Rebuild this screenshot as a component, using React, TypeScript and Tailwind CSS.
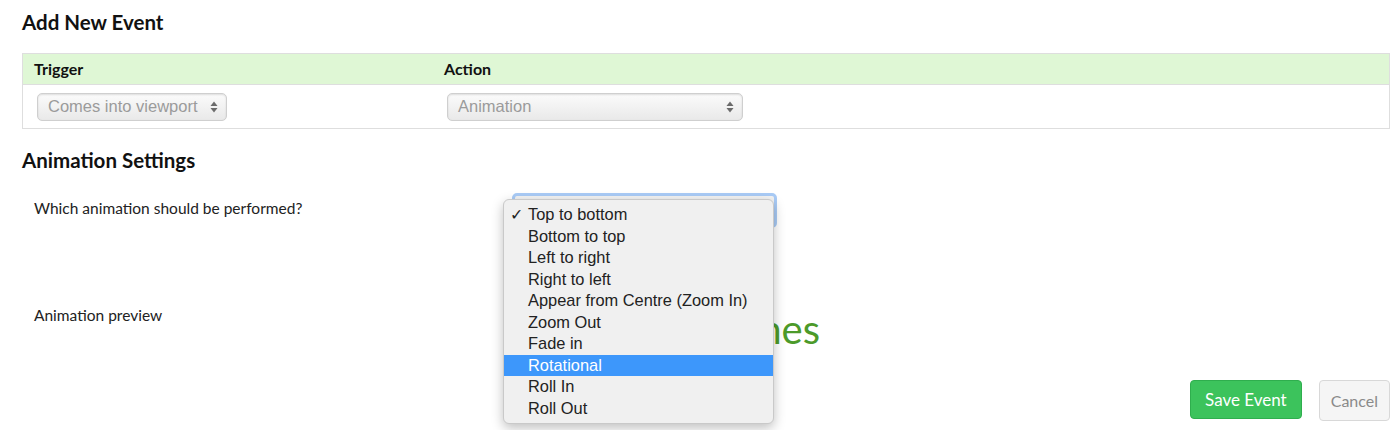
import React from "react";

const options = [
  "Top to bottom",
  "Bottom to top",
  "Left to right",
  "Right to left",
  "Appear from Centre (Zoom In)",
  "Zoom Out",
  "Fade in",
  "Rotational",
  "Roll In",
  "Roll Out",
];

function Arrows() {
  return (
    <svg width="8" height="12" viewBox="0 0 8 12" className="shrink-0">
      <path d="M4 0.5 L7.5 5 L0.5 5 Z" fill="#6b6b6b" />
      <path d="M4 11.5 L7.5 7 L0.5 7 Z" fill="#6b6b6b" />
    </svg>
  );
}

function FakeSelect({ label, className }: { label: string; className: string }) {
  return (
    <div
      className={`flex items-center justify-between h-[28px] pl-[10px] pr-[8px] rounded-[5px] border border-[#cfcfcf] bg-gradient-to-b from-[#fbfbfb] to-[#e9e9e9] shadow-[inset_0_1px_2px_rgba(0,0,0,0.12)] text-[16.5px] text-[#9b9b9b] ${className}`}
      style={{ fontFamily: '"Liberation Sans", Arial, sans-serif' }}
    >
      <span>{label}</span>
      <Arrows />
    </div>
  );
}

export default function App() {
  return (
    <div
      className="w-[1400px] h-[430px] bg-white pl-[22px] pr-[10px] overflow-hidden text-[#222]"
      style={{ fontFamily: 'Lato, "Open Sans", sans-serif' }}
    >
      <h2 className="pt-[9px] h-[53px] text-[20.5px] font-bold leading-[26px] text-[#111]">Add New Event</h2>

      <div className="border border-[#dedede]">
        <div className="grid grid-cols-[410px_1fr] h-[31px] items-center bg-[#dff7d5] border-b border-[#dedede] text-[16px] font-bold text-[#111]">
          <div className="pl-[11px]">Trigger</div>
          <div className="pl-[11px]">Action</div>
        </div>
        <div className="grid grid-cols-[410px_1fr] h-[43px] items-center">
          <div className="pl-[14px]">
            <FakeSelect label="Comes into viewport" className="w-[190px]" />
          </div>
          <div className="pl-[14px]">
            <FakeSelect label="Animation" className="w-[296px]" />
          </div>
        </div>
      </div>

      <h2 className="mt-[18px] h-[26px] text-[20.5px] font-bold leading-[26px] text-[#111]">Animation Settings</h2>

      <div className="grid grid-cols-[478px_1fr] pl-[12px] mt-[20px]">
        <div className="text-[15.5px] leading-[20px] pt-[5px] text-[#222]">Which animation should be performed?</div>
        <div className="relative h-[112px]">
          <div className="w-[265px] h-[35px] rounded-[5px] border-[3px] border-[#a9cbf6] bg-[#f3f3f3]" />
          <div
            className="absolute left-[-9px] top-[6px] w-[271px] z-10 rounded-[6px] bg-[#f0f0f0] border border-[#c9c9c9] shadow-[0_4px_12px_rgba(0,0,0,0.25)] py-[4px] text-[16.4px] text-[#222]"
            style={{ fontFamily: '"Liberation Sans", Arial, sans-serif' }}
          >
            {options.map((o, i) => (
              <div
                key={o}
                className={`relative h-[21.5px] leading-[21.5px] pl-[24px] ${i === 7 ? "bg-[#3d97fb] text-white" : ""}`}
              >
                {i === 0 && <span className="absolute left-[6px] top-0">✓</span>}
                {o}
              </div>
            ))}
          </div>
        </div>

        <div className="text-[15.5px] leading-[20px] text-[#222]">Animation preview</div>
        <div className="h-[64px]">
          <div className="text-[40px] font-normal leading-[48px] text-[#4c9a2a] w-[308px] text-right whitespace-nowrap">
            Here it comes
          </div>
        </div>
      </div>

      <div className="flex justify-end gap-[17px] mt-[11px]">
        <button className="h-[39px] px-[14px] rounded-[4px] bg-[#3cc35c] border border-[#2fae4e] text-white text-[17px]">
          Save Event
        </button>
        <button className="h-[41px] px-[11px] rounded-[4px] bg-[#f5f5f5] border border-[#d8d8d8] text-[#8a8a8a] text-[16px]">
          Cancel
        </button>
      </div>
    </div>
  );
}
